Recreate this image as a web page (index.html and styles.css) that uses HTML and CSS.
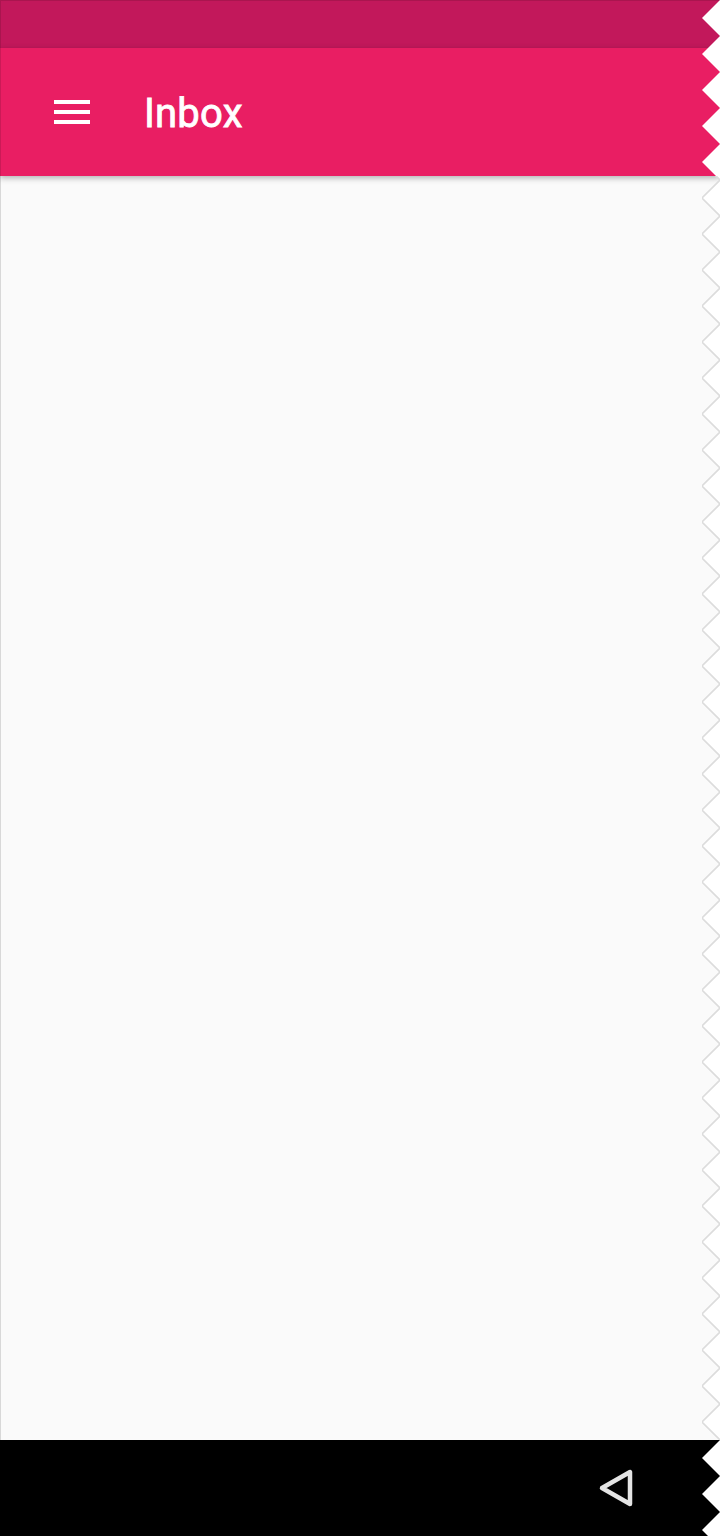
FILE: index.html
```html
<!DOCTYPE html>
<html lang="en">
<head>
    <meta charset="UTF-8">
    <meta name="viewport" content="width=device-width, initial-scale=1.0">
    <title>Inbox</title>
    <link rel="stylesheet" href="styles.css">
</head>
<body>
    <div class="phone">
        <div class="status-bar"></div>
        <header class="toolbar">
            <div class="menu-icon">
                <span></span>
                <span></span>
                <span></span>
            </div>
            <h1>Inbox</h1>
        </header>
        <main class="content"></main>
        <nav class="nav-bar">
            <svg class="back-icon" width="36" height="40" viewBox="0 0 36 40">
                <path d="M32 4 L32 36 L4 20 Z" fill="none" stroke="#e4e4e4" stroke-width="4.5" stroke-linejoin="round"/>
            </svg>
        </nav>

        <!-- torn right edge, laid over everything -->
        <svg class="torn-edge" width="18" height="1536" viewBox="0 0 18 1536">
            <defs>
                <pattern id="teeth" width="18" height="36" patternUnits="userSpaceOnUse">
                    <path d="M18 0 L0 18 L18 36 Z" fill="#fff"/>
                </pattern>
                <pattern id="teethLine" width="18" height="36" patternUnits="userSpaceOnUse">
                    <path d="M18 0 L0 18 L18 36" fill="none" stroke="#dcdcdc" stroke-width="1.6"/>
                </pattern>
            </defs>
            <rect width="18" height="1536" fill="url(#teeth)"/>
            <rect y="176" width="18" height="1264" fill="url(#teethLine)"/>
        </svg>
    </div>
</body>
</html>
```

FILE: styles.css
```css
body {
    margin: 0;
    background-color: #fff;
    font-family: 'Roboto', sans-serif;
}
.phone {
    position: relative;
    display: flex;
    flex-direction: column;
    width: 720px;
    height: 1536px;
    overflow: hidden;
}
.status-bar {
    height: 48px;
    flex-shrink: 0;
    background-color: #c2185b;
    box-shadow: inset 1px 1px 0 rgba(0, 0, 0, 0.12);
}
.toolbar {
    position: relative;
    display: flex;
    align-items: center;
    height: 128px;
    flex-shrink: 0;
    padding-left: 54px;
    box-sizing: border-box;
    background-color: #e91e63;
    box-shadow: inset 1px 0 0 rgba(0, 0, 0, 0.12), 0 2px 6px rgba(0, 0, 0, 0.3);
}
.toolbar h1 {
    margin: 2px 0 0 54px;
    font-size: 40px;
    font-weight: 400;
    letter-spacing: 0.2px;
    -webkit-text-stroke: 0.8px #fff;
    color: #fff;
}
.menu-icon {
    display: flex;
    flex-direction: column;
    gap: 6px;
    width: 36px;
}
.menu-icon span {
    height: 4px;
    background-color: #fff;
}
.content {
    flex: 1;
    background-color: #fafafa;
    border-left: 1px solid #d8d8d8;
}
.nav-bar {
    display: flex;
    align-items: center;
    height: 96px;
    flex-shrink: 0;
    padding-left: 598px;
    box-sizing: border-box;
    background-color: #000;
}
.torn-edge {
    position: absolute;
    top: 0;
    right: 0;
}
```
